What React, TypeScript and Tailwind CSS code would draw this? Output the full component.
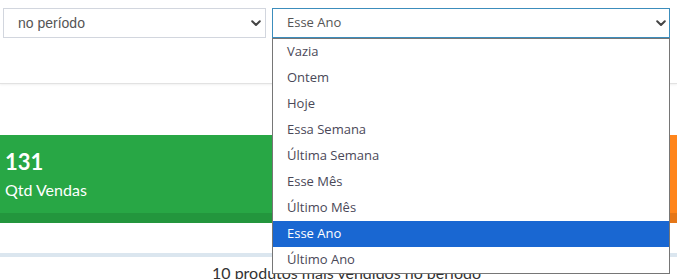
import React from "react";

const periodos = [
  "Vazia",
  "Ontem",
  "Hoje",
  "Essa Semana",
  "Última Semana",
  "Esse Mês",
  "Último Mês",
  "Esse Ano",
  "Último Ano",
];

function Chevron() {
  return (
    <svg width="10" height="7" viewBox="0 0 10 7" className="shrink-0">
      <path d="M1.2 1.2 L5 5 L8.8 1.2" fill="none" stroke="#444" strokeWidth="2" strokeLinecap="round" strokeLinejoin="round" />
    </svg>
  );
}

export default function App() {
  return (
    <div className="w-[677px] h-[279px] overflow-hidden bg-white relative font-['Liberation_Sans',sans-serif]">
      {/* Filtros */}
      <div className="h-[84px] border-b border-[#e2e2e2] shadow-[0_1px_2px_rgba(0,0,0,0.06)] pt-[8px] pl-[3px] flex gap-[6px]">
        <div className="w-[263px] h-[30px] border border-[#d2d6de] flex items-center justify-between pl-[14px] pr-[4px]">
          <span className="text-[14px] text-[#555]">no período</span>
          <Chevron />
        </div>
        <div className="relative w-[398px]">
          <div className="h-[30px] border border-[#3c8dbc] flex items-center justify-between pl-[14px] pr-[3px] font-['Open_Sans',sans-serif]">
            <span className="text-[13px] text-[#555]">Esse Ano</span>
            <Chevron />
          </div>
          {/* lista aberta */}
          <div className="absolute left-0 top-[30px] w-[398px] z-10 bg-white border border-[#767676] font-['Open_Sans',sans-serif]">
            {periodos.map((p) => (
              <div
                key={p}
                className={`h-[26px] flex items-center pl-[14px] text-[13px] ${
                  p === "Esse Ano" ? "bg-[#1967d2] text-white" : "text-[#4a4858]"
                }`}>
                {p}
              </div>
            ))}
          </div>
        </div>
      </div>

      {/* Cards */}
      <div className="mt-[51px] flex gap-[10px] font-['Lato',sans-serif]">
        <div className="w-[660px] h-[88px] bg-[#28a745] flex flex-col text-white">
          <div className="flex-1 pt-[12px] px-[5px]">
            <div className="text-[22px] font-bold leading-[30px]">131</div>
            <div className="text-[16px] leading-[26px]">Qtd Vendas</div>
          </div>
          <div className="h-[10px] bg-black/10"></div>
        </div>
        <div className="w-[200px] h-[88px] bg-[#ff851b] flex flex-col shrink-0">
          <div className="flex-1"></div>
          <div className="h-[10px] bg-black/10"></div>
        </div>
      </div>

      {/* Tabela */}
      <div className="mt-[30px] h-[4px] bg-[#dbe6ef]"></div>
      <div className="pt-[5px] text-center font-['Lato',sans-serif] text-[16px] leading-[22px] text-[#333] pl-[16px]">
        10 produtos mais vendidos no período
      </div>
    </div>
  );
}
